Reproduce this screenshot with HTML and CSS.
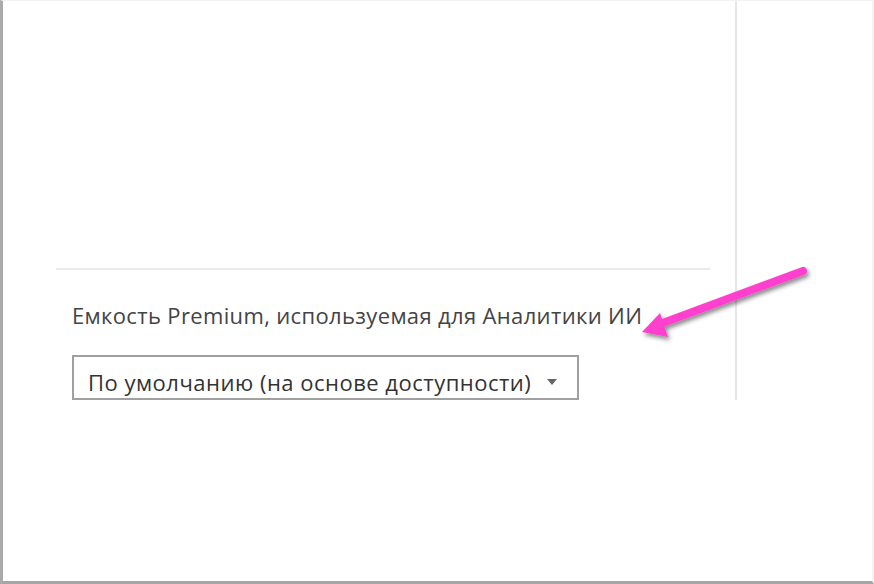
FILE: index.html
```html
<!DOCTYPE html>
<html lang="ru">
<head>
    <meta charset="UTF-8">
    <title>Емкость Premium</title>
    <link rel="stylesheet" href="styles.css">
</head>
<body>
    <div class="frame">
        <div class="panel">
            <div class="panel-top"></div>
            <div class="divider"></div>

            <!-- Настройка емкости -->
            <div class="setting">
                <div class="setting-label">Емкость Premium, используемая для Аналитики ИИ</div>
                <div class="select-box">
                    <span class="select-text">По умолчанию (на основе доступности)</span>
                    <span class="select-caret"></span>
                </div>
            </div>
        </div>
    </div>

    <!-- Стрелка-аннотация -->
    <svg class="callout-arrow" width="874" height="584" viewBox="0 0 874 584">
        <defs>
            <filter id="arrowShadow" x="-10%" y="-30%" width="130%" height="170%">
                <feDropShadow dx="2" dy="3" stdDeviation="2" flood-color="#000" flood-opacity="0.45"/>
            </filter>
        </defs>
        <g filter="url(#arrowShadow)">
            <line x1="803" y1="271" x2="660" y2="324" stroke="#ff3fcf" stroke-width="8" stroke-linecap="round"/>
            <polygon points="642,332 660,313 668,337" fill="#ff3fcf"/>
        </g>
    </svg>
</body>
</html>
```

FILE: styles.css
```css
/* базовые стили */
* {
    box-sizing: border-box;
}
body {
    margin: 0;
    background-color: #fff;
    font-family: "Open Sans", "Noto Sans", "Liberation Sans", sans-serif;
    color: #444;
}

/* рамка скриншота */
.frame {
    width: 874px;
    height: 584px;
    border-top: 1px solid #f2f2f2;
    border-left: 3px solid #aaa;
    border-bottom: 3px solid #a6a6a6;
    border-right: 2px solid #f4f4f4;
    position: relative;
}

/* основная панель */
.panel {
    width: 734px;
    height: 399px;
    border-right: 2px solid #e6e6e6;
    padding: 0 25px 0 53px;
    display: flex;
    flex-direction: column;
}
.panel-top {
    height: 267px;
}
.divider {
    height: 2px;
    background-color: #ebebeb;
}

.setting {
    padding-left: 16px;
}
.setting-label {
    margin-top: 31px;
    font-size: 22px;
    line-height: 28px;
    letter-spacing: 0.35px;
    color: #444;
}
.select-box {
    margin-top: 26px;
    width: 507px;
    height: 45px;
    border: 2px solid #a0a0a0;
    display: flex;
    align-items: flex-end;
    padding: 0 20px 2px 14px;
    overflow: hidden;
}
.select-text {
    flex-grow: 1;
    font-size: 22px;
    line-height: 28px;
    letter-spacing: 0.5px;
    color: #333;
}
.select-caret {
    width: 0;
    height: 0;
    border-left: 5px solid transparent;
    border-right: 5px solid transparent;
    border-top: 6px solid #666;
    margin-bottom: 11px;
}

/* стрелка поверх содержимого */
.callout-arrow {
    position: absolute;
    left: 0;
    top: 0;
}
```
